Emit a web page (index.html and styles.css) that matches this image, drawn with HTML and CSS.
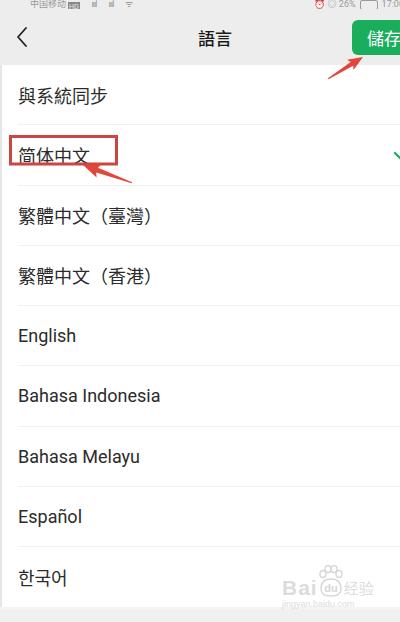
FILE: index.html
```html
<!DOCTYPE html>
<html lang="zh">
<head>
  <meta charset="UTF-8" />
  <meta name="viewport" content="width=device-width, initial-scale=1.0"/>
  <title>語言</title>
  <link rel="stylesheet" href="styles.css">
</head>
<body>
  <div class="screen">
    <div class="status">
      <span class="carrier">中国移动</span>
      <span class="hd">HD</span>
      <span class="bars">ıııl</span>
      <span class="bars">ıııl</span>
      <span class="bars">ᯤ</span>
      <span class="status-right">⏰ ◎ 26% <span class="battery"></span> 17:00</span>
    </div>

    <header class="navbar">
      <span class="back">
        <svg width="14" height="22" viewBox="0 0 14 22"><path d="M11 2 L3 11 L11 20" fill="none" stroke="#222" stroke-width="1.8" stroke-linecap="round" stroke-linejoin="round"/></svg>
      </span>
      <h1 class="title">語言</h1>
      <button class="save">儲存</button>
    </header>

    <ul class="lang-list">
      <li class="lang-item">與系統同步</li>
      <li class="lang-item selected">简体中文
        <svg class="check" width="24" height="18" viewBox="0 0 24 18"><path d="M3 5 L10 12 L22 0" fill="none" stroke="#1aad5c" stroke-width="2.2" stroke-linecap="round"/></svg>
      </li>
      <li class="lang-item">繁體中文（臺灣）</li>
      <li class="lang-item">繁體中文（香港）</li>
      <li class="lang-item">English</li>
      <li class="lang-item">Bahasa Indonesia</li>
      <li class="lang-item">Bahasa Melayu</li>
      <li class="lang-item">Español</li>
      <li class="lang-item last">한국어</li>
    </ul>
    <div class="bottom-strip"></div>

    <!-- annotations drawn over the screenshot -->
    <svg class="annotations" width="400" height="622" viewBox="0 0 400 622">
      <rect x="10.5" y="136.5" width="106" height="27.5" fill="none" stroke="#cc4540" stroke-width="3"/>
      <polygon transform="translate(83 165) rotate(20)" points="0,0 17,-7 15,-2.6 52,-0.6 52,0.6 15,2.6 17,7" fill="#e2473d"/>
      <polygon transform="translate(363 57) rotate(148)" points="0,0 15,-6 13,-2.3 41,-0.6 41,0.6 13,2.3 15,6" fill="#e2473d"/>
    </svg>

    <div class="watermark">
      <div class="wm-logo">
        <span class="wm-bai">Bai</span>
        <svg class="wm-paw" width="26" height="34" viewBox="0 0 26 34">
          <g fill="none" stroke="#d6d6d6" stroke-width="1.4">
            <ellipse cx="5" cy="9" rx="3" ry="3.5"/>
            <ellipse cx="10" cy="4" rx="3" ry="3.5"/>
            <ellipse cx="16" cy="4" rx="3" ry="3.5"/>
            <ellipse cx="21" cy="9" rx="3" ry="3.5"/>
            <path d="M3 24 Q3 14 13 14 Q23 14 23 24 Q23 31 13 31 Q3 31 3 24 Z"/>
          </g>
          <text x="13" y="27" text-anchor="middle" class="wm-du">du</text>
        </svg>
        <span class="wm-jy">经验</span>
      </div>
      <div class="wm-url">jingyan.baidu.com</div>
    </div>
  </div>
</body>
</html>
```

FILE: styles.css
```css
body {
  margin: 0;
  background: #ededed;
  font-family: Roboto, "Noto Sans CJK SC", sans-serif;
  color: #2b2b2b;
}

.screen {
  position: relative;
  width: 400px;
  height: 622px;
  overflow: hidden;
  background: #ededed;
}

.status {
  height: 9px;
  overflow: hidden;
  display: flex;
  align-items: flex-end;
  padding-left: 30px;
  font-size: 9px;
  line-height: 15px;
  color: #999;
}

.carrier {
  margin-bottom: -3px;
}

.hd {
  margin-left: 2px;
  margin-bottom: -3px;
  padding: 0 1px;
  background: #888;
  color: #eee;
  font-size: 7px;
  line-height: 10px;
}

.bars {
  margin-left: 12px;
  margin-bottom: -3px;
  letter-spacing: -1px;
}

.status-right {
  margin-left: auto;
  margin-right: -4px;
  margin-bottom: -3px;
  display: flex;
  align-items: center;
  gap: 4px;
}

.battery {
  display: inline-block;
  width: 16px;
  height: 8px;
  border: 1px solid #999;
  border-radius: 2px;
}

.navbar {
  height: 56px;
  display: grid;
  grid-template-columns: 183px 1fr auto;
  align-items: center;
  padding-left: 15px;
}

.back {
  display: flex;
  align-items: center;
}

.title {
  margin: 0;
  font-size: 17px;
  font-weight: 500;
  color: #1a1a1a;
  font-family: "Noto Sans CJK TC", sans-serif;
}

.save {
  width: 66px;
  height: 35px;
  margin-right: -18px;
  padding: 0 0 0 15px;
  text-align: left;
  background: #1aad5c;
  color: #fff;
  border: none;
  border-radius: 6px;
  font-size: 17px;
  font-family: "Noto Sans CJK TC", sans-serif;
}

.lang-list {
  list-style: none;
  margin: 0;
  padding: 0;
  background: #fff;
  border-left: 2px solid #e6e6e6;
}

.lang-item {
  height: 60.25px;
  box-sizing: border-box;
  margin-left: 16px;
  display: flex;
  align-items: center;
  border-bottom: 1px solid #f1f1f1;
  font-size: 18px;
}

.lang-item.last {
  border-bottom: none;
}

.check {
  margin-left: auto;
  margin-right: -16px;
  margin-top: 4px;
}

.bottom-strip {
  height: 20px;
  border-top: 2px solid #f4f4f4;
  background: #f0f0f0;
}

.annotations {
  position: absolute;
  top: 0;
  left: 0;
  pointer-events: none;
}

.watermark {
  position: absolute;
  left: 282px;
  top: 565px;
  color: #dcdcdc;
  font-family: "Liberation Sans", sans-serif;
}

.wm-logo {
  display: flex;
  align-items: flex-end;
  height: 34px;
}

.wm-bai {
  font-size: 21px;
  font-weight: bold;
  line-height: 22px;
  letter-spacing: 1px;
}

.wm-du {
  font-size: 11px;
  font-weight: bold;
  fill: #d6d6d6;
  font-family: "Liberation Sans", sans-serif;
}

.wm-jy {
  font-size: 15px;
  line-height: 22px;
  font-family: "Noto Sans CJK SC", sans-serif;
}

.wm-url {
  font-size: 9px;
  line-height: 10px;
}
```
